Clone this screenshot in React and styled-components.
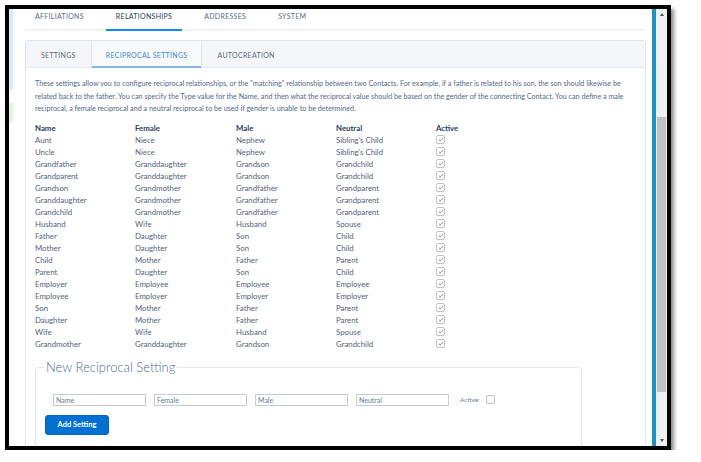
import React from "react";
import styled, { createGlobalStyle } from "styled-components";

const rows = [
  ["Aunt", "Niece", "Nephew", "Sibling's Child"],
  ["Uncle", "Niece", "Nephew", "Sibling's Child"],
  ["Grandfather", "Granddaughter", "Grandson", "Grandchild"],
  ["Grandparent", "Granddaughter", "Grandson", "Grandchild"],
  ["Grandson", "Grandmother", "Grandfather", "Grandparent"],
  ["Granddaughter", "Grandmother", "Grandfather", "Grandparent"],
  ["Grandchild", "Grandmother", "Grandfather", "Grandparent"],
  ["Husband", "Wife", "Husband", "Spouse"],
  ["Father", "Daughter", "Son", "Child"],
  ["Mother", "Daughter", "Son", "Child"],
  ["Child", "Mother", "Father", "Parent"],
  ["Parent", "Daughter", "Son", "Child"],
  ["Employer", "Employee", "Employee", "Employee"],
  ["Employee", "Employer", "Employer", "Employer"],
  ["Son", "Mother", "Father", "Parent"],
  ["Daughter", "Mother", "Father", "Parent"],
  ["Wife", "Wife", "Husband", "Spouse"],
  ["Grandmother", "Granddaughter", "Grandson", "Grandchild"],
];

const Global = createGlobalStyle`
  body {
    margin: 0;
    background: #fff;
    font-family: Lato, "Open Sans", sans-serif;
  }
`;

const Window = styled.div`
  margin: 5px 0 0 5px;
  width: 658px;
  height: 437px;
  border: 4px solid #000;
  box-shadow: 3px 4px 4px rgba(0, 0, 0, 0.45);
  display: flex;
  background: #fff;
  overflow: hidden;
`;

const LeftStrip = styled.div`
  width: 4px;
  flex: none;
  background: linear-gradient(
    to bottom,
    #d3eef9 0 81px,
    #fff 81px 94px,
    #e2f5df 94px 114px,
    #fff 114px
  );
`;

const Content = styled.div`
  width: 639px;
  flex: none;
  padding: 0 6px 0 12px;
  box-sizing: border-box;
  overflow: hidden;
`;

const BlueBar = styled.div`
  width: 4px;
  flex: none;
  background: #1a93c2;
`;

const Scrollbar = styled.div`
  width: 11px;
  flex: none;
  background: #f0f0f0;
  display: flex;
  flex-direction: column;
  align-items: center;
`;

const Arrow = styled.div`
  height: 11px;
  display: flex;
  align-items: center;
  justify-content: center;
  &::after {
    content: "";
    border-left: 2.5px solid transparent;
    border-right: 2.5px solid transparent;
    ${({ down }) =>
      down ? "border-top: 3px solid #505050;" : "border-bottom: 3px solid #505050;"}
  }
`;

const Thumb = styled.div`
  width: 9px;
  height: 275px;
  margin-top: 97px;
  background: #c1c1c1;
`;

const Track = styled.div`
  flex: 1;
`;

const TopTabs = styled.div`
  display: flex;
  gap: 12px;
  height: 20px;
  border-bottom: 2px solid #eef1f6;
`;

const TopTab = styled.div`
  padding: 3px 10px 0;
  font-size: 7px;
  line-height: 9px;
  letter-spacing: 0.3px;
  text-transform: uppercase;
  color: ${({ active }) => (active ? "#2b3a55" : "#5b6b86")};
  border-bottom: 2px solid ${({ active }) => (active ? "#1589ee" : "transparent")};
  margin-bottom: -2px;
`;

const Card = styled.div`
  margin-top: 9px;
  border: 1px solid #dfe3ea;
  border-radius: 4px;
  height: 420px;
`;

const CardHeader = styled.div`
  display: flex;
  height: 26px;
  background: #f4f6f9;
  border-bottom: 1px solid #e6e9ef;
  border-radius: 4px 4px 0 0;
`;

const SubTab = styled.div`
  padding: 0 14px;
  display: flex;
  align-items: center;
  font-size: 7px;
  letter-spacing: 0.3px;
  text-transform: uppercase;
  color: ${({ active }) => (active ? "#3a8ad8" : "#5b6b86")};
  background: ${({ active }) => (active ? "#f7f9fb" : "transparent")};
  border-left: 1px solid ${({ active }) => (active ? "#e1e5eb" : "transparent")};
  border-right: 1px solid ${({ active }) => (active ? "#e1e5eb" : "transparent")};
  box-shadow: ${({ active }) => (active ? "inset 0 -2px 0 #8cb6e2" : "none")};
  margin-bottom: -1px;
`;

const Body = styled.div`
  padding: 10px 9px 0 9px;
`;

const Intro = styled.p`
  margin: 0;
  font-size: 7.2px;
  line-height: 12.5px;
  color: #54698d;
  white-space: nowrap;
`;

const Table = styled.div`
  margin-top: 6px;
  display: grid;
  grid-template-columns: 100px 101px 100px 100px auto;
  grid-auto-rows: 12px;
  font-size: 7.8px;
  color: #526380;
`;

const Cell = styled.div`
  display: flex;
  align-items: center;
  white-space: nowrap;
  ${({ head }) => head && "font-weight: 700; color: #2a3b5a;"}
`;

const Box = styled.span`
  width: 7px;
  height: 7px;
  border: 1px solid #c2c2c2;
  border-radius: 2px;
  background: #fff;
  display: flex;
  align-items: center;
  justify-content: center;
`;

const Fieldset = styled.fieldset`
  margin: 10px 0 0 0;
  width: 547px;
  box-sizing: border-box;
  border: 1px solid #e3e7ed;
  border-radius: 4px;
  padding: 0 9px 20px 9px;
  min-width: 0;
`;

const Legend = styled.legend`
  font-size: 13px;
  line-height: 15px;
  font-weight: 300;
  color: #54698d;
  padding: 0 2px;
  margin-left: -1px;
`;

const InputRow = styled.div`
  display: flex;
  align-items: center;
  gap: 8px;
  margin: 19px 0 0 8px;
`;

const Input = styled.input`
  width: 93px;
  height: 12px;
  box-sizing: border-box;
  border: 1px solid #c6cbd2;
  padding: 0 2px;
  font-family: inherit;
  font-size: 7px;
  color: #54698d;
  &::placeholder {
    color: #6a7b96;
  }
`;

const ActiveLabel = styled.span`
  margin-left: 3px;
  font-size: 6.5px;
  color: #6a7b96;
  display: flex;
  align-items: center;
  gap: 6px;
`;

const Button = styled.button`
  margin-top: 9px;
  width: 64px;
  height: 20px;
  background: #0070d2;
  border: 1px solid #0064c0;
  border-radius: 3px;
  color: #fff;
  font-family: inherit;
  font-weight: 700;
  font-size: 7.5px;
  padding: 0;
`;

const Check = () => (
  <svg width="6" height="5" viewBox="0 0 6 5">
    <path d="M0.8 2.6 L2.3 4 L5.2 1" fill="none" stroke="#777" strokeWidth="0.9" />
  </svg>
);

export default function App() {
  return (
    <>
      <Global />
      <Window>
        <LeftStrip />
        <Content>
          <TopTabs>
            <TopTab>Affiliations</TopTab>
            <TopTab active>Relationships</TopTab>
            <TopTab>Addresses</TopTab>
            <TopTab>System</TopTab>
          </TopTabs>
          <Card>
            <CardHeader>
              <SubTab>Settings</SubTab>
              <SubTab active>Reciprocal Settings</SubTab>
              <SubTab>Autocreation</SubTab>
            </CardHeader>
            <Body>
              <Intro>
                These settings allow you to configure reciprocal relationships, or the "matching"
                relationship between two Contacts. For example, if a father is related to his son,
                the son should likewise be
                <br />
                related back to the father. You can specify the Type value for the Name, and then
                what the reciprocal value should be based on the gender of the connecting Contact.
                You can define a male
                <br />
                reciprocal, a female reciprocal and a neutral reciprocal to be used if gender is
                unable to be determined.
              </Intro>
              <Table>
                <Cell head>Name</Cell>
                <Cell head>Female</Cell>
                <Cell head>Male</Cell>
                <Cell head>Neutral</Cell>
                <Cell head>Active</Cell>
                {rows.map((r, i) => (
                  <React.Fragment key={i}>
                    {r.map((c, j) => (
                      <Cell key={j}>{c}</Cell>
                    ))}
                    <Cell>
                      <Box>
                        <Check />
                      </Box>
                    </Cell>
                  </React.Fragment>
                ))}
              </Table>
              <Fieldset>
                <Legend>New Reciprocal Setting</Legend>
                <InputRow>
                  <Input placeholder="Name" />
                  <Input placeholder="Female" />
                  <Input placeholder="Male" />
                  <Input placeholder="Neutral" />
                  <ActiveLabel>
                    Active:
                    <Box />
                  </ActiveLabel>
                </InputRow>
                <Button>Add Setting</Button>
              </Fieldset>
            </Body>
          </Card>
        </Content>
        <BlueBar />
        <Scrollbar>
          <Arrow />
          <Thumb />
          <Track />
          <Arrow down />
        </Scrollbar>
      </Window>
    </>
  );
}
